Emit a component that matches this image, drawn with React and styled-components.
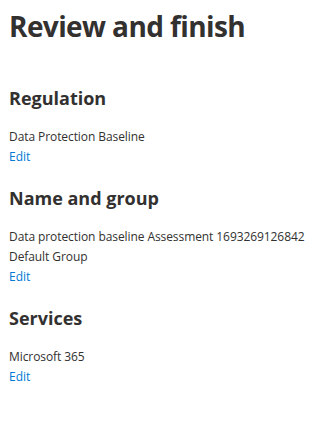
import React from "react";
import styled, { createGlobalStyle } from "styled-components";

const Global = createGlobalStyle`
  html, body { margin: 0; padding: 0; background: #fff; }
  body { font-family: "Segoe UI", "Open Sans", "Liberation Sans", sans-serif; color: #323130; }
`;

const Page = styled.div`
  padding: 6px 9px;
  display: flex;
  flex-direction: column;
`;

const Title = styled.h1`
  margin: 0 0 39px;
  font-size: 28px;
  line-height: 40px;
  font-weight: 700;
  letter-spacing: -0.6px;
  color: #323130;
`;

const Section = styled.section`
  display: flex;
  flex-direction: column;
  margin-bottom: 18px;
`;

const Heading = styled.h2`
  margin: 0 0 16px;
  font-size: 18px;
  line-height: 26px;
  font-weight: 700;
  color: #323130;
`;

const Line = styled.div`
  font-size: 12px;
  line-height: 20px;
  letter-spacing: -0.08px;
  color: #323130;
`;

const EditLink = styled.a`
  font-size: 12px;
  line-height: 20px;
  color: #0078d4;
  text-decoration: none;
  cursor: pointer;
  align-self: flex-start;
`;

const sections = [
  { title: "Regulation", lines: ["Data Protection Baseline"] },
  {
    title: "Name and group",
    lines: ["Data protection baseline Assessment 1693269126842", "Default Group"],
  },
  { title: "Services", lines: ["Microsoft 365"] },
];

export default function App() {
  return (
    <>
      <Global />
      <Page>
        <Title>Review and finish</Title>
        {sections.map((s) => (
          <Section key={s.title}>
            <Heading>{s.title}</Heading>
            {s.lines.map((l) => (
              <Line key={l}>{l}</Line>
            ))}
            <EditLink>Edit</EditLink>
          </Section>
        ))}
      </Page>
    </>
  );
}
